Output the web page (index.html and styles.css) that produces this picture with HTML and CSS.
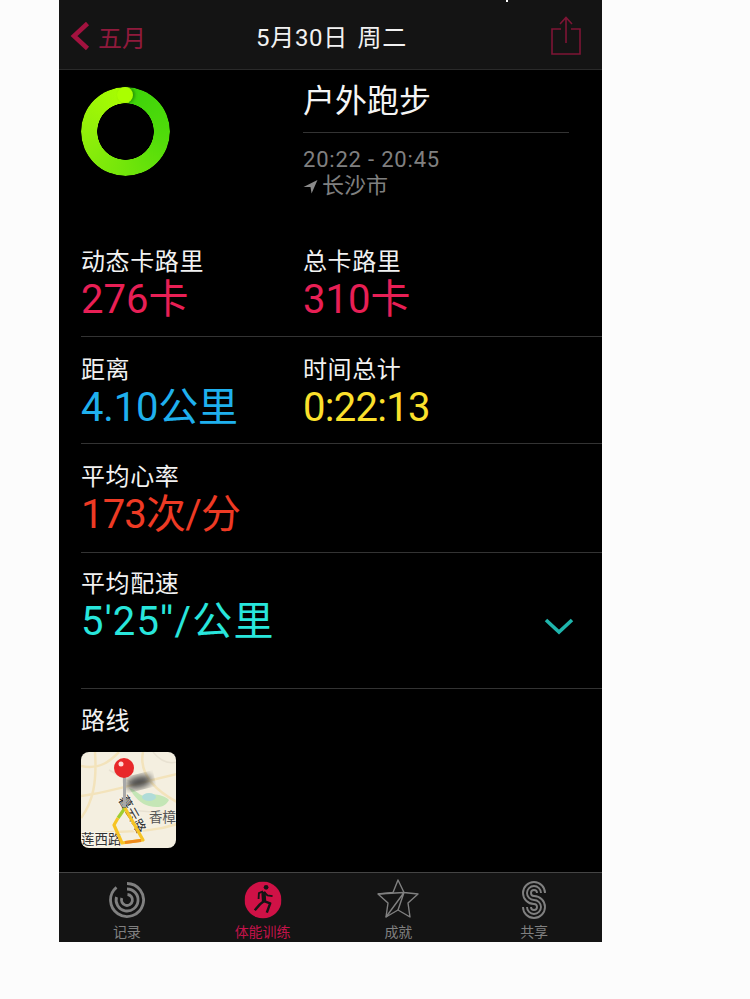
FILE: index.html
```html
<!DOCTYPE html>
<html lang="zh-CN">

<head>
    <meta charset="UTF-8">
    <meta name="viewport" content="width=device-width, initial-scale=1.0">
    <title>体能训练</title>
    <link rel="stylesheet" href="styles.css">
</head>

<body>
    <div class="phone">
        <header class="nav">
            <span class="status-speck"></span>
            <a class="nav-back">
                <svg class="chevron" width="20" height="30" viewBox="0 0 20 30">
                    <path d="M17.500 2.500 L4 15 L17.500 27.500" fill="none" stroke="#a3123f" stroke-width="4.600" />
                </svg>
                <span>五月</span>
            </a>
            <div class="nav-title">5月30日 周二</div>
            <svg class="share" width="30" height="40" viewBox="0 0 30 40">
                <path d="M10 13 H1 V38 H29 V13 H20" fill="none" stroke="#7d1535" stroke-width="1.600" />
                <path d="M15 27 V2 M9 8 L15 1.500 L21 8" fill="none" stroke="#7d1535" stroke-width="1.600" />
            </svg>
        </header>

        <main class="content">
            <section class="summary">
                <div class="ring-col">
                    <div class="ring"></div>
                    <div class="ring-head"></div>
                </div>
                <div class="info">
                    <h1>户外跑步</h1>
                    <div class="time">20:22 - 20:45</div>
                    <div class="place">
                        <svg width="15" height="15" viewBox="0 0 14 14">
                            <path d="M13.500 1 L0.500 7.500 L7 7.500 L8 13.500 Z" fill="#8a8a8a" />
                        </svg>
                        长沙市
                    </div>
                </div>
            </section>

            <section class="row row-first">
                <div class="stat">
                    <div class="label">动态卡路里</div>
                    <div class="value pink">276卡</div>
                </div>
                <div class="stat">
                    <div class="label">总卡路里</div>
                    <div class="value pink">310卡</div>
                </div>
            </section>
            <section class="row row-second">
                <div class="stat">
                    <div class="label">距离</div>
                    <div class="value blue">4.10公里</div>
                </div>
                <div class="stat">
                    <div class="label">时间总计</div>
                    <div class="value yellow">0:22:13</div>
                </div>
            </section>
            <section class="row row-third">
                <div class="stat">
                    <div class="label">平均心率</div>
                    <div class="value red">173次/分</div>
                </div>
            </section>
            <section class="row row-fourth">
                <div class="stat">
                    <div class="label">平均配速</div>
                    <div class="value cyan">5'25''/公里</div>
                </div>
                <svg class="expand" width="30" height="18" viewBox="0 0 30 18">
                    <path d="M2 3 L15 15 L28 3" fill="none" stroke="#1fb5ac" stroke-width="3.600" />
                </svg>
            </section>

            <section class="route">
                <div class="label">路线</div>
                <svg class="map" width="95" height="96" viewBox="0 0 95 96">
                    <defs>
                        <filter id="blur"><feGaussianBlur stdDeviation="3.500" /></filter>
                    </defs>
                    <rect width="95" height="96" fill="#f4efe0" />
                    <path d="M0 14 C20 18 30 8 38 0 M14 0 C16 30 12 50 0 66 M0 44 C30 40 60 30 96 22 M62 0 C58 20 70 36 96 50 M0 84 C30 76 60 84 96 72" fill="none" stroke="#f3e3bb" stroke-width="2.500" />
                    <path d="M72 0 C80 10 88 12 96 10 M48 58 L96 62 M28 18 L50 30" fill="none" stroke="#e8e2d2" stroke-width="1.500" />
                    <path d="M48 36 C56 38 58 44 64 44 C72 40 84 44 88 48 C84 56 76 56 68 54 C60 52 54 46 48 36 Z" fill="#c4e6b6" />
                    <ellipse cx="68" cy="45" rx="7" ry="4" fill="#b0dcd8" />
                    <text class="map-text" x="68" y="70">香樟</text>
                    <text class="map-text road" x="37" y="47" transform="rotate(60 37 47)">暮云路</text>
                    <text class="map-text road" x="0" y="92">莲西路</text>
                    <ellipse cx="58" cy="30" rx="13" ry="6" fill="#444" filter="url(#blur)" transform="rotate(-14 58 30)" />
                    <path d="M44 56 L37 66" fill="none" stroke="#9fce30" stroke-width="3.200" />
                    <path d="M44 56 L62 88 L41 91 L33 73 L37 66" fill="none" stroke="#f6c425" stroke-width="3.200" stroke-linejoin="round" />
                    <path d="M44 90.500 L60 88.500" fill="none" stroke="#ef8a1d" stroke-width="3.200" />
                    <rect x="42" y="22" width="3" height="33" fill="#a8a8a8" />
                    <circle cx="43" cy="16" r="10" fill="#e8282a" />
                    <circle cx="40" cy="12" r="2.500" fill="#ffd9d5" />
                </svg>
            </section>
        </main>

        <nav class="tabs">
            <div class="tab">
                <svg width="36" height="36" viewBox="0 0 36 36">
                    <g fill="none" stroke="#808080" stroke-width="2.800">
                        <path d="M18 1.500 A16.500 16.500 0 1 1 7.500 5.300" />
                        <path d="M18 7 A11 11 0 1 1 7.500 15" />
                        <path d="M18.500 12.500 A5.500 5.500 0 1 1 12.800 16" />
                    </g>
                </svg>
                <span>记录</span>
            </div>
            <div class="tab active">
                <svg width="37" height="37" viewBox="0 0 36 36">
                    <circle cx="18" cy="18" r="18" fill="#cf1146" />
                    <circle cx="21" cy="5.700" r="2.300" fill="#141414" />
                    <g fill="none" stroke="#141414" stroke-linejoin="round">
                        <path d="M18.500 10 L19 19" stroke-width="4.200" />
                        <path d="M18 9.500 L14 11.300 L13.700 17" stroke-width="1.800" />
                        <path d="M19 10 L22.300 13.500 L27.300 14.300" stroke-width="1.800" />
                        <path d="M19 19 L15 22.300 L10 28" stroke-width="2.400" />
                        <path d="M19 19 L25 21.300 L21.700 30.300" stroke-width="2.400" />
                    </g>
                </svg>
                <span>体能训练</span>
            </div>
            <div class="tab">
                <svg width="42" height="42" viewBox="0 0 42 42">
                    <g fill="none" stroke="#808080" stroke-width="1.400" stroke-linejoin="round">
                        <path d="M21 1 L16 13.500 L1 15 L11 24 L9 38 L21 31 L33 38 L31 24 L41 15 L27 13.500 Z" />
                        <path d="M1 15 L27 13.500 L9 38 M27 13.500 L21 31" />
                    </g>
                </svg>
                <span>成就</span>
            </div>
            <div class="tab">
                <svg width="26" height="40" viewBox="-1 -1 26 40">
                    <g fill="none" stroke="#808080" stroke-width="1.900">
                        <path d="M23 12 A11 11 0 1 0 12 23 A3 3 0 1 1 9 26" />
                        <path d="M19 12 A7 7 0 1 0 12 19 A7 7 0 1 1 5 26" />
                        <path d="M15 12 A3 3 0 1 0 12 15 A11 11 0 1 1 1 26" />
                    </g>
                </svg>
                <span>共享</span>
            </div>
        </nav>
    </div>
</body>

</html>
```

FILE: styles.css
```css
* {
    box-sizing: border-box;
}

body {
    margin: 0;
    background-color: #fcfcfc;
    font-family: 'Roboto', 'Noto Sans CJK SC', sans-serif;
}

.phone {
    width: 543px;
    height: 942px;
    margin-left: 59px;
    background-color: #000;
    display: flex;
    flex-direction: column;
}

.nav {
    height: 70px;
    flex: none;
    padding: 7px 21px 0 11px;
    background-color: #141414;
    border-bottom: 1px solid #2a2a2a;
    display: flex;
    align-items: center;
    justify-content: space-between;
    position: relative;
}

.status-speck {
    position: absolute;
    left: 447px;
    top: 0;
    width: 2px;
    height: 2px;
    background-color: #fff;
}

.nav-back {
    display: flex;
    align-items: center;
    gap: 8px;
    margin-top: -4px;
    color: #8f1a3c;
    font-size: 24px;
}

.nav-title {
    position: absolute;
    left: 197px;
    top: 20px;
    color: #f2f2f2;
    font-size: 24px;
    letter-spacing: 0.7px;
    word-spacing: 3px;
    line-height: 36px;
}

.share {
    margin-bottom: 4px;
}

.content {
    flex: 1;
}

.summary {
    height: 170px;
    padding-left: 22px;
    display: flex;
}

.ring-col {
    width: 222px;
    padding-top: 17px;
    position: relative;
}

.ring {
    width: 89px;
    height: 89px;
    border-radius: 50%;
    background: conic-gradient(from 6deg, #3ed30a, #50dc0a 25%, #74e60a 50%, #94f00a 75%, #aaff00);
    -webkit-mask: radial-gradient(circle, transparent 28px, #000 28.500px);
    mask: radial-gradient(circle, transparent 28px, #000 28.500px);
}

.ring-head {
    position: absolute;
    left: 36px;
    top: 17px;
    width: 16px;
    height: 16px;
    border-radius: 50%;
    background-color: #aaff00;
    box-shadow: 2px 0 3px rgba(20, 90, 0, 0.5);
}

.info {
    width: 266px;
}

h1 {
    margin: 0;
    height: 63px;
    padding-top: 10px;
    border-bottom: 1px solid #333;
    color: #f5f5f5;
    font-size: 32px;
    font-weight: 400;
    line-height: 42px;
}

.time {
    margin-top: 14px;
    color: #808080;
    font-size: 22px;
    letter-spacing: 0.8px;
    line-height: 26px;
}

.place {
    color: #808080;
    font-size: 22px;
    line-height: 26px;
    display: flex;
    align-items: center;
    gap: 4px;
}

.row {
    margin-left: 22px;
    display: grid;
    grid-template-columns: 222px 222px;
    position: relative;
}

.row-first {
    height: 97px;
    padding-top: 8px;
    border-bottom: 1px solid #333;
}

.row-second {
    height: 107px;
    padding-top: 19px;
    border-bottom: 1px solid #333;
}

.row-third {
    height: 109px;
    padding-top: 19px;
    border-bottom: 1px solid #333;
}

.row-fourth {
    height: 136px;
    padding-top: 17px;
    border-bottom: 1px solid #333;
}

.label {
    color: #f2f2f2;
    font-size: 24px;
    letter-spacing: 0.6px;
    line-height: 28px;
}

.value {
    margin-top: 2px;
    font-size: 40px;
    line-height: 44px;
    white-space: nowrap;
}

.pink {
    color: #e81f55;
}

.blue {
    color: #1fb0ee;
    letter-spacing: -0.2px;
}

.yellow {
    color: #fbe02c;
    letter-spacing: -0.7px;
}

.red {
    color: #ee3a24;
    letter-spacing: -0.8px;
}

.cyan {
    color: #28e6dc;
    letter-spacing: 1.200px;
}

.expand {
    position: absolute;
    left: 463px;
    top: 64px;
}

.route {
    height: 183px;
    padding: 18px 0 0 22px;
}

.map {
    display: block;
    margin-top: 17px;
    border-radius: 8px;
}

.map-text {
    fill: #555;
    font-size: 13.500px;
}

.road {
    fill: #333;
    paint-order: stroke;
    stroke: #f8f5ea;
    stroke-width: 2px;
}

.tabs {
    height: 71px;
    flex: none;
    background-color: #141414;
    border-top: 1px solid #444;
    display: grid;
    grid-template-columns: repeat(4, 1fr);
}

.tab {
    height: 70px;
    padding-bottom: 2px;
    color: #808080;
    font-size: 14px;
    line-height: 18px;
    display: flex;
    flex-direction: column;
    align-items: center;
    justify-content: flex-end;
    position: relative;
}

.tab svg {
    position: absolute;
    left: 50%;
    top: 27px;
    transform: translate(-50%, -50%);
}

.active {
    color: #c3124a;
}
```
